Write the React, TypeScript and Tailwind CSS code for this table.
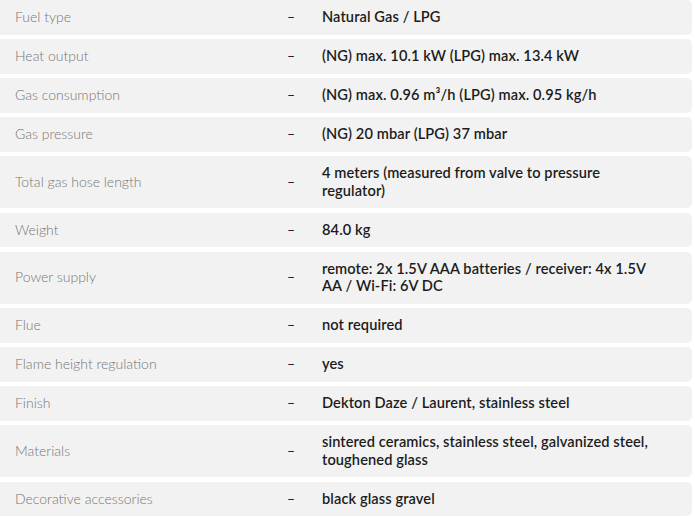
const specs: { label: string; value: string }[] = [
  { label: "Fuel type", value: "Natural Gas / LPG" },
  { label: "Heat output", value: "(NG) max. 10.1 kW (LPG) max. 13.4 kW" },
  { label: "Gas consumption", value: "(NG) max. 0.96 m³/h (LPG) max. 0.95 kg/h" },
  { label: "Gas pressure", value: "(NG) 20 mbar (LPG) 37 mbar" },
  {
    label: "Total gas hose length",
    value: "4 meters (measured from valve to pressure regulator)",
  },
  { label: "Weight", value: "84.0 kg" },
  {
    label: "Power supply",
    value: "remote: 2x 1.5V AAA batteries / receiver: 4x 1.5V AA / Wi-Fi: 6V DC",
  },
  { label: "Flue", value: "not required" },
  { label: "Flame height regulation", value: "yes" },
  { label: "Finish", value: "Dekton Daze / Laurent, stainless steel" },
  {
    label: "Materials",
    value: "sintered ceramics, stainless steel, galvanized steel, toughened glass",
  },
  { label: "Decorative accessories", value: "black glass gravel" },
];

export default function App() {
  return (
    <div className="w-[695px] h-[517px] overflow-hidden bg-white font-['Lato',sans-serif]">
      <div className="flex w-[692px] flex-col gap-[4.5px]">
        {specs.map((row) => (
          <div
            key={row.label}
            className="flex items-center rounded-r-[5px] bg-[#f2f2f2] pt-[8px] pb-[9px]"
          >
            <div className="w-[287px] shrink-0 pl-[15px] text-[14px] font-light leading-[17.5px] text-[#767676]">
              {row.label}
            </div>
            <div className="w-[35px] shrink-0 text-[14px] font-medium leading-[17.5px] text-[#222]">
              –
            </div>
            <div className="w-[340px] shrink-0 text-[14.6px] font-semibold leading-[17.5px] tracking-[0.1px] text-[#1c1c1c]">
              {row.value}
            </div>
          </div>
        ))}
      </div>
    </div>
  );
}
